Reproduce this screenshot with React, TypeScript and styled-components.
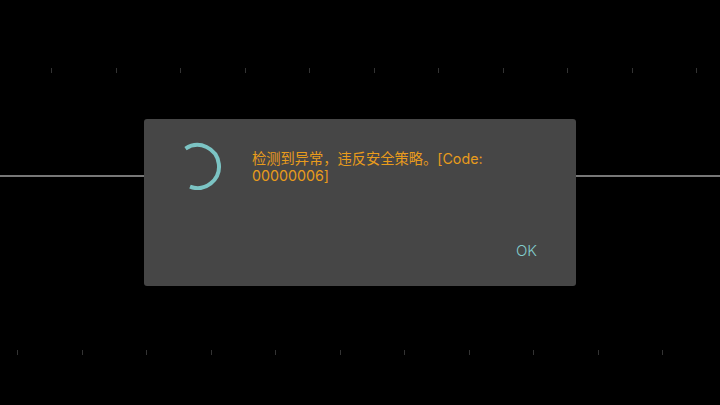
import React from "react";
import styled, { createGlobalStyle } from "styled-components";

const GlobalStyle = createGlobalStyle`
  html, body {
    margin: 0;
    padding: 0;
    background: #000000;
  }
`

const Stage = styled.div`
  position: relative;
  width: 720px;
  height: 405px;
  overflow: hidden;
  background: #000000;
  font-family: Inter, "Noto Sans CJK SC", sans-serif;
`
const Track = styled.div`
  display: flex;
  flex-direction: column;
  height: 100%;
  padding-top: 68px;
  box-sizing: border-box;
`
const TickRow = styled.div<{ $offset: number }>`
  display: flex;
  justify-content: space-between;
  width: 646px;
  height: 5px;
  margin-left: ${(p) => p.$offset}px;
`
const Tick = styled.span`
  width: 1px;
  height: 5px;
  background: #333333;
`
const Line = styled.div`
  height: 2px;
  margin-top: 102px;
  margin-bottom: 173px;
  background: #777777;
`
const Overlay = styled.div`
  position: absolute;
  inset: 0;
  display: flex;
  align-items: center;
  justify-content: center;
`
const Dialog = styled.div`
  display: flex;
  flex-direction: column;
  width: 432px;
  height: 167px;
  padding: 23px 39px 26px 30px;
  box-sizing: border-box;
  background: #464646;
  border-radius: 3px;
`
const Body = styled.div`
  display: flex;
  align-items: flex-start;
  flex: 1;
  gap: 30px;
`
const Spinner = styled.svg`
  flex: none;
  width: 48px;
  height: 48px;
`
const Message = styled.div`
  width: 250px;
  margin-top: 8px;
  font-size: 14.25px;
  line-height: 17px;
  color: #e89c1c;
`
const Actions = styled.div`
  display: flex;
  justify-content: flex-end;
`
const OkButton = styled.button`
  padding: 0;
  border: none;
  background: transparent;
  font-family: inherit;
  font-size: 15px;
  font-weight: 300;
  line-height: 18px;
  color: #82cccc;
`

const ticks = Array.from({ length: 11 }, (_, i) => i);

export default function App() {
    return (
        <Stage>
            <GlobalStyle/>
            <Track>
                <TickRow $offset={51}>
                    {ticks.map((t) => <Tick key={t}/>)}
                </TickRow>
                <Line/>
                <TickRow $offset={17}>
                    {ticks.map((t) => <Tick key={t}/>)}
                </TickRow>
            </Track>
            <Overlay>
                <Dialog>
                    <Body>
                        <Spinner viewBox="0 0 48 48">
                            <path
                                d="M11.5 6.7 A21.5 21.5 0 1 1 16 44.7"
                                fill="none"
                                stroke="#7cc4c4"
                                strokeWidth="4"
                            />
                        </Spinner>
                        <Message>检测到异常，违反安全策略。[Code: 00000006]</Message>
                    </Body>
                    <Actions>
                        <OkButton>OK</OkButton>
                    </Actions>
                </Dialog>
            </Overlay>
        </Stage>
    )
}
